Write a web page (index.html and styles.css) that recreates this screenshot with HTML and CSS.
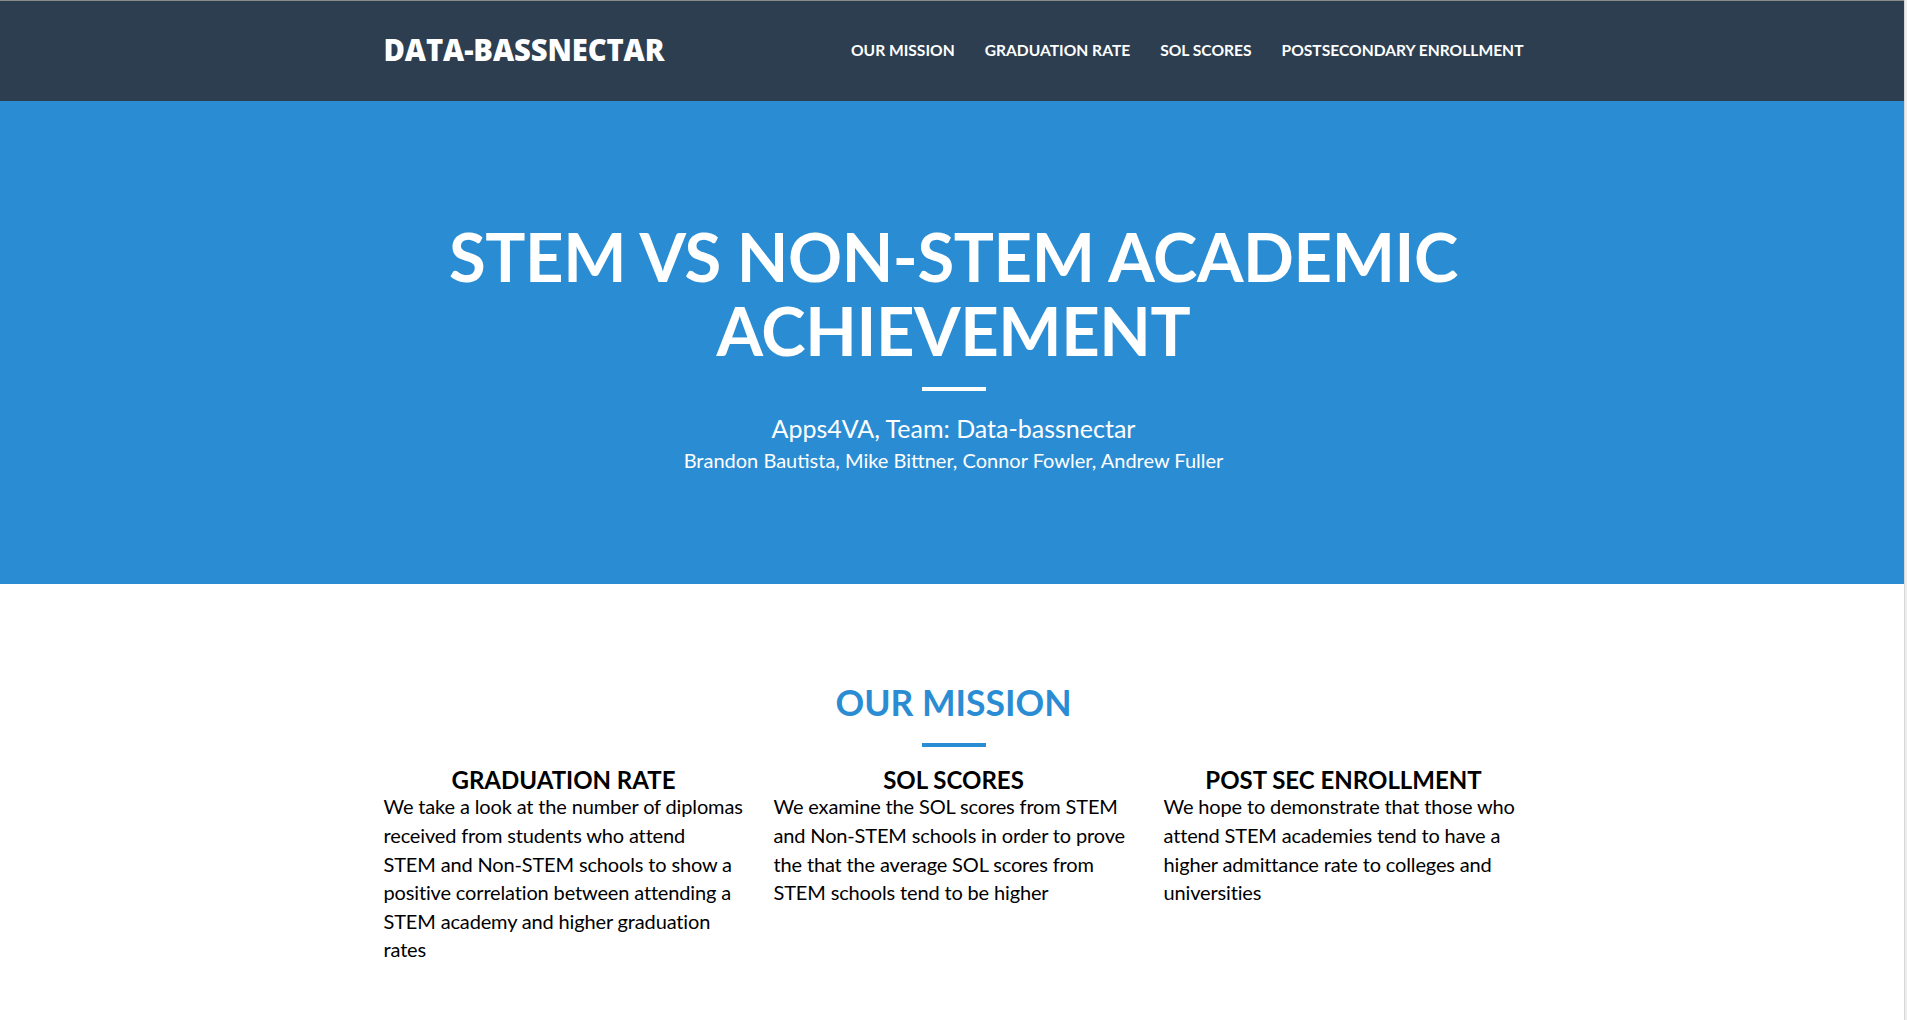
FILE: index.html
```html
<!DOCTYPE html>
<html lang="en">
<head>
<meta charset="utf-8">
<title>Data-Bassnectar</title>
<link rel="stylesheet" href="styles.css">
</head>
<body>
<nav class="navbar">
  <div class="container nav-inner">
    <a class="brand" href="#">DATA-BASSNECTAR</a>
    <ul class="nav-links">
      <li><a href="#mission">Our Mission</a></li>
      <li><a href="#grad">Graduation Rate</a></li>
      <li><a href="#sol">SOL Scores</a></li>
      <li><a href="#post">Postsecondary Enrollment</a></li>
    </ul>
  </div>
</nav>
<header class="hero">
  <h1 class="hero-title">STEM VS NON-STEM ACADEMIC<br>ACHIEVEMENT</h1>
  <hr class="divider divider-light">
  <p class="hero-sub">Apps4VA, Team: Data-bassnectar</p>
  <p class="hero-names">Brandon Bautista, Mike Bittner, Connor Fowler, Andrew Fuller</p>
</header>
<section class="mission" id="mission">
  <h2 class="section-title">OUR MISSION</h2>
  <hr class="divider divider-blue">
  <div class="container cols">
    <div class="col">
      <h3 class="col-title">GRADUATION RATE</h3>
      <p class="col-text">We take a look at the number of diplomas received from students who attend<br>STEM and Non-STEM schools to show a positive correlation between attending a STEM academy and higher graduation rates</p>
    </div>
    <div class="col">
      <h3 class="col-title">SOL SCORES</h3>
      <p class="col-text">We examine the SOL scores from STEM and Non-STEM schools in order to prove the that the average SOL scores from STEM schools tend to be higher</p>
    </div>
    <div class="col">
      <h3 class="col-title">POST SEC ENROLLMENT</h3>
      <p class="col-text">We hope to demonstrate that those who attend STEM academies tend to have a higher admittance rate to colleges and universities</p>
    </div>
  </div>
</section>
</body>
</html>
```
FILE: styles.css
```css
* { box-sizing: border-box; }
html, body { margin: 0; padding: 0; }
body {
  font-family: Lato, "Open Sans", "Liberation Sans", sans-serif;
  background: #fff;
  color: #000;
  min-height: 1020px;
}
body::after {
  content: "";
  position: fixed;
  top: 0;
  right: 0;
  width: 2px;
  height: 100%;
  background: #ececec;
  border-left: 1px solid #d8d8d8;
}
.container {
  width: 1140px;
  margin: 0 auto;
}
.navbar {
  background: #2c3e50;
  border-top: 1px solid #8a8a8a;
  height: 101px;
}
.nav-inner {
  height: 100%;
  display: flex;
  align-items: center;
  justify-content: space-between;
}
.brand {
  font-family: "Open Sans", "DejaVu Sans", sans-serif;
  font-weight: 800;
  font-size: 29.2px;
  color: #fff;
  text-decoration: none;
  letter-spacing: -0.1px;
  margin-bottom: 3px;
}
.nav-links {
  list-style: none;
  margin: 0 0 4px;
  padding: 0;
  display: flex;
  gap: 30px;
}
.nav-links a {
  color: #fff;
  text-decoration: none;
  text-transform: uppercase;
  font-weight: 700;
  font-size: 15.6px;
}
.hero {
  background: #2a8dd4;
  color: #fff;
  height: 483px;
  padding-top: 119px;
  text-align: center;
  display: flex;
  flex-direction: column;
  align-items: center;
}
.hero-title {
  margin: 0;
  font-size: 67px;
  font-weight: 700;
  line-height: 1.1;
  letter-spacing: -0.4px;
}
.divider {
  border: none;
  width: 64px;
  height: 4px;
  margin: 0;
  flex: none;
}
.divider-light { background: #fff; margin-top: 20px; }
.hero-sub {
  margin: 22px 0 0;
  font-size: 25px;
  line-height: 1.2;
}
.hero-names {
  margin: 5px 0 0;
  font-size: 20px;
  line-height: 1.2;
}
.mission {
  padding-top: 99px;
  display: flex;
  flex-direction: column;
  align-items: center;
}
.section-title {
  margin: 0;
  color: #2a8dd4;
  font-size: 35.5px;
  font-weight: 700;
  line-height: 1.1;
}
.divider-blue { background: #2a8dd4; margin-top: 21px; }
.cols {
  display: grid;
  grid-template-columns: repeat(3, 360px);
  column-gap: 30px;
  margin-top: 18px;
}
.col-title {
  margin: 0 0 -1px;
  padding-top: 2px;
  text-align: center;
  font-size: 24px;
  font-weight: 700;
  line-height: 1.1;
}
.col-text {
  margin: 0;
  font-size: 20px;
  line-height: 1.42857;
  letter-spacing: -0.15px;
}
```
